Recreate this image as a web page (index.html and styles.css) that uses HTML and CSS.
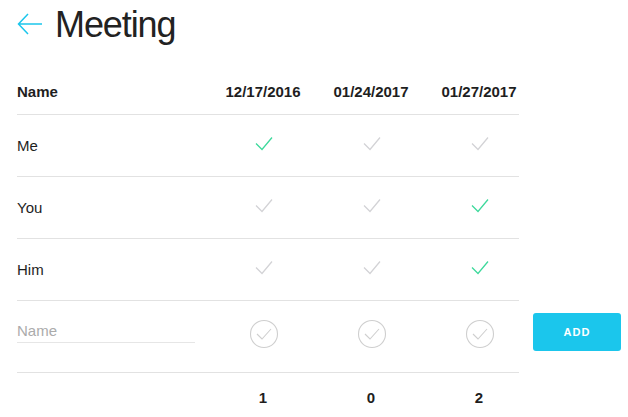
FILE: index.html
```html
<!DOCTYPE html>
<html>
<head>
<meta charset="utf-8">
<link rel="stylesheet" href="styles.css">
</head>
<body>
<div class="page">
  <header class="top">
    <svg class="back" width="26" height="24" viewBox="0 0 26 24"><path d="M25 11H1.5M11 1L1.5 11L11 21" fill="none" stroke="#1bc6ec" stroke-width="1.5"/></svg>
    <h1 class="title">Meeting</h1>
  </header>

  <div class="table">
    <div class="row head">
      <div class="name">Name</div>
      <div class="cell">12/17/2016</div>
      <div class="cell">01/24/2017</div>
      <div class="cell">01/27/2017</div>
    </div>

    <div class="row body">
      <div class="name">Me</div>
      <div class="cell"><svg class="chk on" width="18" height="15" viewBox="0 0 18 15"><path d="M1 7.5L7 13.5L17 1.5"/></svg></div>
      <div class="cell"><svg class="chk" width="18" height="15" viewBox="0 0 18 15"><path d="M1 7.5L7 13.5L17 1.5"/></svg></div>
      <div class="cell"><svg class="chk" width="18" height="15" viewBox="0 0 18 15"><path d="M1 7.5L7 13.5L17 1.5"/></svg></div>
    </div>

    <div class="row body">
      <div class="name">You</div>
      <div class="cell"><svg class="chk" width="18" height="15" viewBox="0 0 18 15"><path d="M1 7.5L7 13.5L17 1.5"/></svg></div>
      <div class="cell"><svg class="chk" width="18" height="15" viewBox="0 0 18 15"><path d="M1 7.5L7 13.5L17 1.5"/></svg></div>
      <div class="cell"><svg class="chk on" width="18" height="15" viewBox="0 0 18 15"><path d="M1 7.5L7 13.5L17 1.5"/></svg></div>
    </div>

    <div class="row body">
      <div class="name">Him</div>
      <div class="cell"><svg class="chk" width="18" height="15" viewBox="0 0 18 15"><path d="M1 7.5L7 13.5L17 1.5"/></svg></div>
      <div class="cell"><svg class="chk" width="18" height="15" viewBox="0 0 18 15"><path d="M1 7.5L7 13.5L17 1.5"/></svg></div>
      <div class="cell"><svg class="chk on" width="18" height="15" viewBox="0 0 18 15"><path d="M1 7.5L7 13.5L17 1.5"/></svg></div>
    </div>

    <div class="row input-row">
      <div class="name"><input class="name-input" type="text" placeholder="Name"></div>
      <div class="cell"><svg class="circ" width="30" height="30" viewBox="0 0 30 30"><circle cx="15" cy="15" r="13.5"/><path d="M8 15L13 20L22 10"/></svg></div>
      <div class="cell"><svg class="circ" width="30" height="30" viewBox="0 0 30 30"><circle cx="15" cy="15" r="13.5"/><path d="M8 15L13 20L22 10"/></svg></div>
      <div class="cell"><svg class="circ" width="30" height="30" viewBox="0 0 30 30"><circle cx="15" cy="15" r="13.5"/><path d="M8 15L13 20L22 10"/></svg></div>
      <div class="btn-cell"><button class="add">ADD</button></div>
    </div>

    <div class="row foot">
      <div class="name"></div>
      <div class="cell">1</div>
      <div class="cell">0</div>
      <div class="cell">2</div>
    </div>
  </div>
</div>
</body>
</html>
```

FILE: styles.css
```css
html, body {
  margin: 0;
  padding: 0;
  background: #fff;
}

body {
  font-family: "Liberation Sans", Arial, sans-serif;
  color: #1e1e1e;
}

.page {
  padding-left: 17px;
}

.top {
  display: flex;
  align-items: center;
  height: 48px;
  padding-top: 1px;
}

.back {
  display: block;
  margin-right: 12px;
}

.title {
  margin: 0;
  font-size: 36px;
  font-weight: 400;
  letter-spacing: -1.1px;
  line-height: 36px;
  color: #222;
}

.table {
  margin-top: 19px;
  width: 502px;
}

.row {
  display: grid;
  grid-template-columns: 192px 108px 108px 108px;
  align-items: center;
  width: 502px;
  border-bottom: 1px solid #e2e2e2;
  font-size: 15px;
}

.head {
  height: 46px;
  font-weight: 700;
}

.body {
  height: 61px;
}

.input-row {
  grid-template-columns: 192px 108px 108px 108px 88px;
  height: 71px;
}

.foot {
  height: 48px;
  border-bottom: none;
  font-weight: 700;
}

.cell {
  display: flex;
  justify-content: center;
  align-items: center;
}

.chk {
  display: block;
  margin-top: -4px;
  margin-left: 2px;
}

.chk path {
  fill: none;
  stroke: #d3d3d6;
  stroke-width: 1.3;
}

.chk.on path {
  stroke: #3ed99c;
}

.circ {
  display: block;
  margin-top: -6px;
  margin-left: 2px;
}

.circ circle,
.circ path {
  fill: none;
  stroke: #cfcfcf;
  stroke-width: 1.1;
}

.name-input {
  display: block;
  width: 178px;
  box-sizing: border-box;
  border: none;
  border-bottom: 1px solid #e6e6e6;
  padding: 0 0 3px 0;
  margin-top: -8px;
  font-family: "Liberation Sans", Arial, sans-serif;
  font-size: 15px;
  color: #222;
  outline: none;
  background: transparent;
}

.name-input::placeholder {
  color: #ababab;
}

.btn-cell {
  display: flex;
}

.add {
  width: 88px;
  height: 38px;
  margin-top: -10px;
  border: none;
  border-radius: 3px;
  background: #1bc6ec;
  color: #fff;
  font-family: "Liberation Sans", Arial, sans-serif;
  font-weight: 700;
  font-size: 11px;
  letter-spacing: 1px;
  padding: 0;
}
```
